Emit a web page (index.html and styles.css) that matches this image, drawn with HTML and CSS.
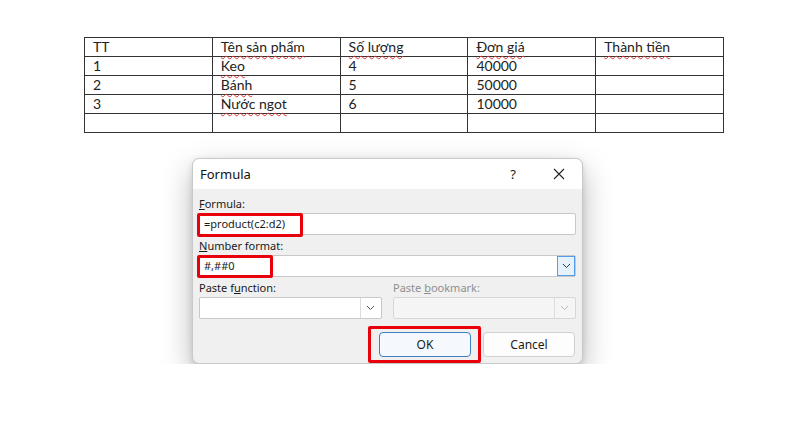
FILE: index.html
```html
<!DOCTYPE html>
<html lang="vi">
<head>
    <meta charset="UTF-8">
    <title>Formula</title>
    <link rel="stylesheet" href="styles.css">
</head>
<body>
<table class="doc_table">
    <tr><td>TT</td><td><span class="spell">Tên sản phẩm</span></td><td><span class="spell">Số lượng</span></td><td><span class="spell">Đơn giá</span></td><td><span class="spell">Thành tiền</span></td></tr>
    <tr><td>1</td><td><span class="spell">Keo</span></td><td>4</td><td>40000</td><td></td></tr>
    <tr><td>2</td><td><span class="spell">Bánh</span></td><td>5</td><td>50000</td><td></td></tr>
    <tr><td>3</td><td><span class="spell">Nước ngot</span></td><td>6</td><td>10000</td><td></td></tr>
    <tr><td></td><td></td><td></td><td></td><td></td></tr>
</table>

<div class="dialog">
    <div class="dialog_title">
        <span class="title_text">Formula</span>
        <span class="title_btn">?</span>
        <span class="title_btn close">
            <svg width="12" height="12" viewBox="0 0 12 12"><path d="M1 1L11 11M11 1L1 11" stroke="#222" stroke-width="1.1" fill="none"/></svg>
        </span>
    </div>
    <div class="dialog_body">
        <div class="field">
            <div class="label"><u>F</u>ormula:</div>
            <div class="input">=product(c2:d2)</div>
        </div>
        <div class="field">
            <div class="label"><u>N</u>umber format:</div>
            <div class="input">#,##0
                <span class="drop_btn"><svg width="9" height="6" viewBox="0 0 9 6"><path d="M1 1L4.5 4.5L8 1" stroke="#333" stroke-width="1" fill="none"/></svg></span>
            </div>
        </div>
        <div class="field_row">
            <div class="field">
                <div class="label">Paste f<u>u</u>nction:</div>
                <div class="input combo"><span class="combo_sep"></span><svg width="9" height="6" viewBox="0 0 9 6"><path d="M1 1L4.5 4.5L8 1" stroke="#555" stroke-width="1" fill="none"/></svg></div>
            </div>
            <div class="field">
                <div class="label disabled">Paste <u>b</u>ookmark:</div>
                <div class="input combo off"><span class="combo_sep"></span><svg width="9" height="6" viewBox="0 0 9 6"><path d="M1 1L4.5 4.5L8 1" stroke="#bbb" stroke-width="1" fill="none"/></svg></div>
            </div>
        </div>
        <div class="btn_area">
            <div class="btn default">OK</div>
            <div class="btn">Cancel</div>
        </div>
    </div>
    <div class="mark mark_formula"></div>
    <div class="mark mark_format"></div>
    <div class="mark mark_ok"></div>
</div>
</body>
</html>
```

FILE: styles.css
```css
body{
    margin: 0;
    background-color: white;
    font-family: "Noto Sans", "Open Sans", sans-serif;
    color: #1a1a1a;
}
.doc_table{
    margin: 37px 0 0 84px;
    width: 640px;
    border-collapse: collapse;
    table-layout: fixed;
    font-family: Lato, "Liberation Sans", sans-serif;
    font-size: 14px;
    color: #222;
}
.doc_table td{
    height: 18px;
    padding: 0 0 0 8px;
    border: 1px solid #333;
    line-height: 18px;
    vertical-align: middle;
    white-space: nowrap;
}
.doc_table .spell{
    text-decoration: underline wavy #d33;
    text-decoration-thickness: 1px;
    text-underline-offset: 3px;
}

.dialog{
    position: relative;
    box-sizing: border-box;
    width: 391px;
    height: 206px;
    margin: 25px 0 0 192px;
    background-color: #f0f0f0;
    border: 1px solid #c9c9c9;
    border-radius: 7px;
    box-shadow: 0 12px 30px rgba(0, 0, 0, 0.28), 0 2px 6px rgba(0, 0, 0, 0.12);
}
.dialog_title{
    display: flex;
    align-items: center;
    height: 30px;
    padding: 0 0 0 7px;
    background-color: white;
    border-radius: 7px 7px 0 0;
}
.dialog_title>.title_text{
    flex: 1;
    font-size: 13px;
    color: #111;
}
.dialog_title>.title_btn{
    width: 46px;
    text-align: center;
    font-size: 13px;
    color: #222;
}
.dialog_title>.close{
    display: flex;
    justify-content: center;
}
.dialog_body{
    padding: 7px 6px 6px 6px;
    display: flex;
    flex-direction: column;
    gap: 3px;
}
.field>.label{
    height: 16px;
    line-height: 16px;
    margin-bottom: 1px;
    font-size: 11px;
    color: #1a1a1a;
}
.field>.label.disabled{
    color: #8f8f8f;
}
.field>.input{
    position: relative;
    box-sizing: border-box;
    height: 22px;
    padding: 0 4px;
    line-height: 20px;
    font-size: 11px;
    background-color: white;
    border: 1px solid #c8c8c8;
    border-radius: 2px;
}
.input>.drop_btn{
    position: absolute;
    top: 0;
    right: 0;
    box-sizing: border-box;
    width: 18px;
    height: 20px;
    display: flex;
    align-items: center;
    justify-content: center;
    background-color: #e5f1fb;
    border: 1px solid #569de5;
}
.field_row{
    display: flex;
    gap: 11px;
}
.field_row>.field{
    flex: 1;
}
.input.combo{
    display: flex;
    align-items: center;
    justify-content: flex-end;
    gap: 5px;
    padding-right: 6px;
}
.input.combo>.combo_sep{
    width: 1px;
    height: 20px;
    background-color: #dcdcdc;
}
.input.combo.off{
    background-color: #f5f5f5;
    border-color: #d6d6d6;
}
.btn_area{
    display: flex;
    justify-content: flex-end;
    gap: 12px;
    margin-top: 10px;
    padding-right: 1px;
}
.btn{
    box-sizing: border-box;
    width: 92px;
    height: 25px;
    line-height: 23px;
    text-align: center;
    font-size: 12px;
    background-color: #fdfdfd;
    border: 1px solid #d0d0d0;
    border-radius: 4px;
}
.btn.default{
    background-color: #f5f9fd;
    border: 1px solid #3d80c4;
}
.mark{
    position: absolute;
    box-sizing: border-box;
    border: 3px solid #e8000b;
    border-radius: 2px;
}
.mark_formula{
    left: 4px;
    top: 54px;
    width: 106px;
    height: 24px;
}
.mark_format{
    left: 4px;
    top: 96px;
    width: 76px;
    height: 23px;
}
.mark_ok{
    left: 175px;
    top: 167px;
    width: 113px;
    height: 37px;
}
```
